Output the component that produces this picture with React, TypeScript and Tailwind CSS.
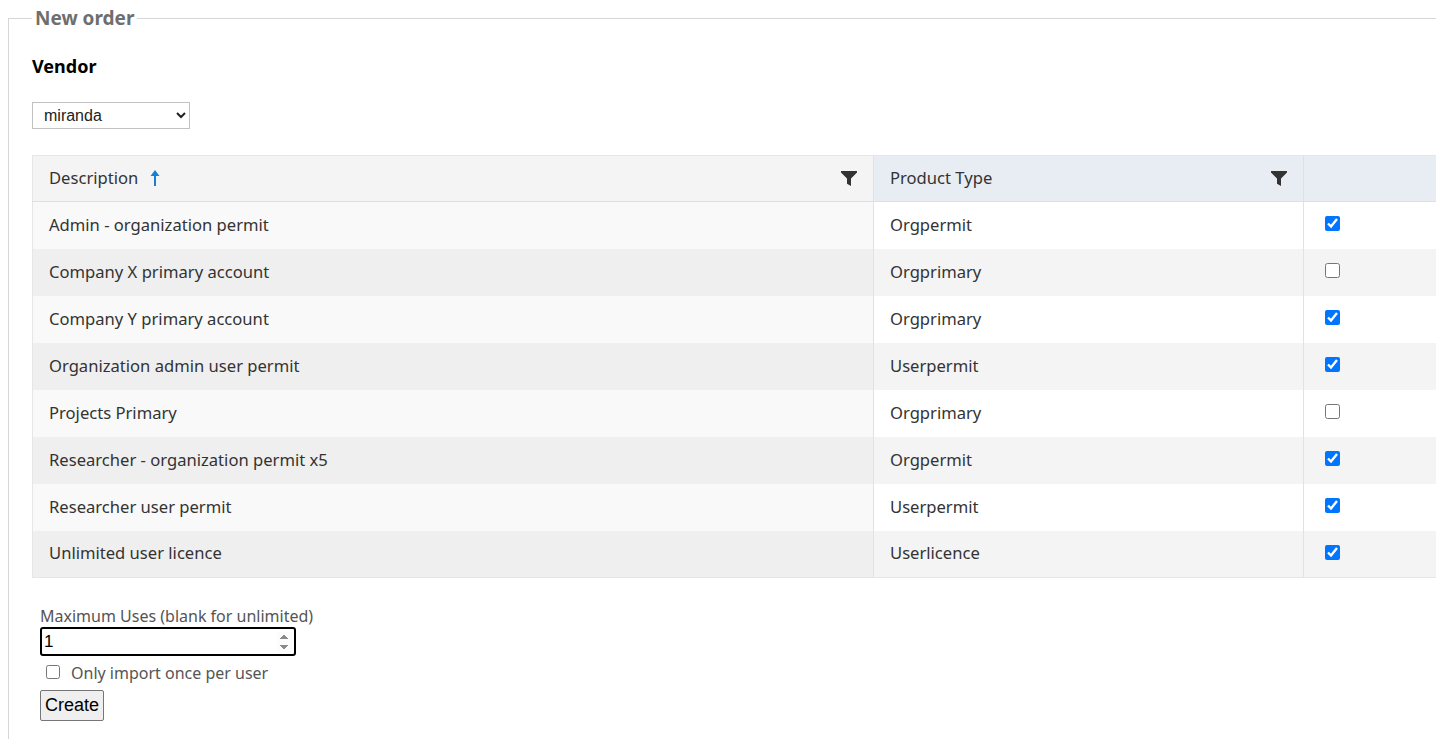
import { useState } from 'react'

interface Product {
  description: string
  type: string
  selected: boolean
}

const PRODUCTS: Product[] = [
  { description: 'Admin - organization permit', type: 'Orgpermit', selected: true },
  { description: 'Company X primary account', type: 'Orgprimary', selected: false },
  { description: 'Company Y primary account', type: 'Orgprimary', selected: true },
  { description: 'Organization admin user permit', type: 'Userpermit', selected: true },
  { description: 'Projects Primary', type: 'Orgprimary', selected: false },
  { description: 'Researcher - organization permit x5', type: 'Orgpermit', selected: true },
  { description: 'Researcher user permit', type: 'Userpermit', selected: true },
  { description: 'Unlimited user licence', type: 'Userlicence', selected: true },
]

function FilterIcon() {
  return (
    <svg width="16" height="16" viewBox="0 0 16 16" className="fill-[#333]">
      <path d="M0 1h16v1.6L10 8.6V16l-4-2.2V8.6L0 2.6z" />
    </svg>
  )
}

function SortUpIcon() {
  return (
    <svg width="10" height="16" viewBox="0 0 10 16" className="fill-[#1a7fd4]">
      <path d="M5 0l4.5 6H6v10H4V6H0.5z" />
    </svg>
  )
}

export default function App() {
  const [rows, setRows] = useState(PRODUCTS)
  const [maxUses, setMaxUses] = useState('1')
  const [once, setOnce] = useState(false)

  const toggle = (i: number) =>
    setRows(r => r.map((p, j) => (j === i ? { ...p, selected: !p.selected } : p)))

  return (
    <div className="w-screen h-screen overflow-hidden bg-white font-['Noto_Sans',sans-serif] text-[#333]">
      <fieldset className="mt-[6px] ml-2 w-[1500px] border border-[#d6d6d6] pl-[23px] pb-6">
        <legend className="px-[3px] text-[19px] font-bold text-[#6e6e6e] leading-[24px]">
          New order
        </legend>

        {/* Vendor */}
        <h3 className="mt-[24px] text-[18px] font-bold text-black leading-[24px]">Vendor</h3>
        <select
          defaultValue="miranda"
          className="mt-[24px] block h-[27px] w-[158px] border border-[#c2c2c2] bg-white pl-[7px] pr-2 font-['Liberation_Sans',sans-serif] text-[16px] text-[#222]"
        >
          <option value="miranda">miranda</option>
        </select>

        {/* Produtos */}
        <table className="mt-[26px] w-[1471px] table-fixed border-collapse border-t border-l border-b border-[#e6e6e6] text-[16.6px]">
          <colgroup>
            <col className="w-[841px]" />
            <col className="w-[430px]" />
            <col className="w-[200px]" />
          </colgroup>
          <thead>
            <tr className="h-[46px] border-b border-[#dcdfe4]">
              <th className="bg-[#f4f4f4] px-4 text-left font-normal border-r border-[#e2e2e2]">
                <div className="flex items-center">
                  <span>Description</span>
                  <span className="ml-[12px] flex"><SortUpIcon /></span>
                  <span className="ml-auto flex"><FilterIcon /></span>
                </div>
              </th>
              <th className="bg-[#e8edf4] px-4 text-left font-normal border-r border-[#dde1e6]">
                <div className="flex items-center">
                  <span>Product Type</span>
                  <span className="ml-auto flex"><FilterIcon /></span>
                </div>
              </th>
              <th className="bg-[#e8edf4]" />
            </tr>
          </thead>
          <tbody>
            {rows.map((p, i) => (
              <tr key={p.description} className="h-[47px]">
                <td className={`px-4 border-r border-[#e2e2e2] ${i % 2 === 0 ? 'bg-[#f9f9f9]' : 'bg-[#efefef]'}`}>
                  {p.description}
                </td>
                <td className={`px-4 border-r border-[#e2e2e2] ${i % 2 === 0 ? 'bg-white' : 'bg-[#f4f4f4]'}`}>
                  {p.type}
                </td>
                <td className={`px-4 ${i % 2 === 0 ? 'bg-white' : 'bg-[#f4f4f4]'}`}>
                  <input
                    type="checkbox"
                    checked={p.selected}
                    onChange={() => toggle(i)}
                    className="ml-[5px] mt-[-3px] block h-[15px] w-[15px]"
                  />
                </td>
              </tr>
            ))}
          </tbody>
        </table>

        {/* Opções */}
        <div className="mt-[27px] ml-2 flex flex-col items-start text-[16px] text-[#555]">
          <label className="leading-[22px]">Maximum Uses (blank for unlimited)</label>
          <input
            type="number"
            value={maxUses}
            onChange={e => setMaxUses(e.target.value)}
            autoFocus
            className="h-[29px] w-[256px] rounded-[3px] border-2 border-black px-[2px] font-['Liberation_Sans',sans-serif] text-[17px] text-black outline-none"
          />
          <label className="mt-[6px] flex items-center leading-[22px]">
            <input
              type="checkbox"
              checked={once}
              onChange={e => setOnce(e.target.checked)}
              className="ml-[6px] mr-[11px] mt-[-3px] h-[14px] w-[14px]"
            />
            Only import once per user
          </label>
          <button className="mt-[6px] h-[31px] rounded-[2px] border border-[#767676] bg-[#efefef] px-[4px] font-['Liberation_Sans',sans-serif] text-[18px] text-black">
            Create
          </button>
        </div>
      </fieldset>
    </div>
  )
}
